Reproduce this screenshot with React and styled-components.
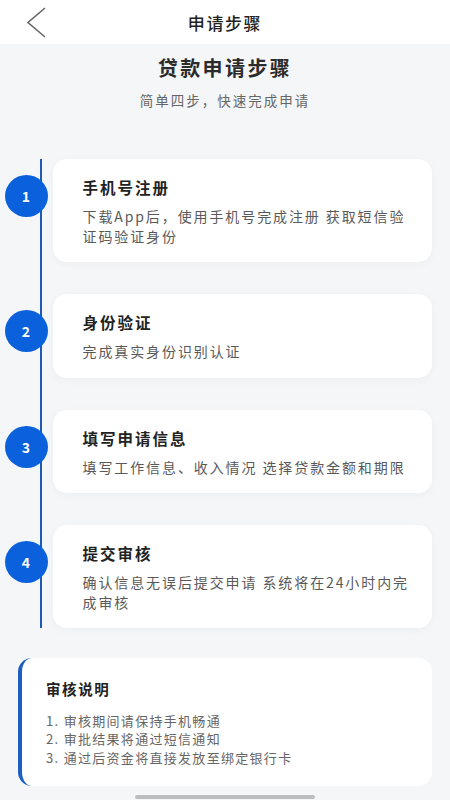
import React from 'react';
import styled, { createGlobalStyle } from 'styled-components';

const steps = [
  { title: '手机号注册', desc: '下载App后，使用手机号完成注册 获取短信验证码验证身份' },
  { title: '身份验证', desc: '完成真实身份识别认证' },
  { title: '填写申请信息', desc: '填写工作信息、收入情况 选择贷款金额和期限' },
  { title: '提交审核', desc: '确认信息无误后提交申请 系统将在24小时内完成审核' },
];

const notes = [
  '1. 审核期间请保持手机畅通',
  '2. 审批结果将通过短信通知',
  '3. 通过后资金将直接发放至绑定银行卡',
];

const GlobalStyle = createGlobalStyle`
  html, body {
    margin: 0;
    padding: 0;
    background: #f5f6f8;
    font-family: "Noto Sans CJK SC", "Noto Sans", sans-serif;
  }
  * { box-sizing: border-box; }
`;

const Page = styled.div`
  width: 450px;
  min-height: 800px;
  display: flex;
  flex-direction: column;
  background: #f5f6f8;
`;

const NavBar = styled.header`
  height: 44px;
  background: #fff;
  display: grid;
  grid-template-columns: 60px 1fr 60px;
  align-items: center;
`;

const BackButton = styled.button`
  border: 0;
  background: none;
  padding: 0 0 0 26px;
  height: 44px;
  display: flex;
  align-items: center;
`;

const NavTitle = styled.h1`
  margin: 0;
  text-align: center;
  font-size: 17px;
  font-weight: 500;
  letter-spacing: 1.6px;
  color: #222;
`;

const Intro = styled.section`
  display: flex;
  flex-direction: column;
  align-items: center;
  padding-top: 11px;
`;

const Heading = styled.h2`
  margin: 0;
  font-size: 20px;
  line-height: 26px;
  font-weight: 700;
  letter-spacing: 2.4px;
  color: #2b2b2b;
`;

const Sub = styled.p`
  margin: 9px 0 0;
  font-size: 13.5px;
  line-height: 20px;
  letter-spacing: 2px;
  color: #666;
`;

const Timeline = styled.div`
  margin: 49px 18px 0 40px;
  border-left: 2.5px solid #1c5bb5;
  padding-left: 10.5px;
  display: flex;
  flex-direction: column;
  gap: 32px;
`;

const Step = styled.div`
  position: relative;
`;

const Marker = styled.div`
  position: absolute;
  left: -48px;
  top: 16px;
  width: 43px;
  height: 42px;
  border-radius: 50%;
  background: #0b60dc;
  color: #fff;
  font-size: 14px;
  font-weight: 700;
  display: flex;
  align-items: center;
  justify-content: center;
`;

const Card = styled.div`
  background: #fff;
  border-radius: 14px;
  padding: 18px 16px 16px 30px;
  box-shadow: 0 2px 8px rgba(30, 40, 60, 0.04);
`;

const CardTitle = styled.h3`
  margin: 0;
  font-size: 15.5px;
  line-height: 20px;
  font-weight: 700;
  letter-spacing: 2px;
  color: #222;
`;

const CardDesc = styled.p`
  margin: 10px 0 0;
  font-size: 14px;
  line-height: 19.5px;
  letter-spacing: 1.9px;
  color: #595959;
`;

const Notice = styled.section`
  margin: 30px 18px 0;
  background: #fff;
  border-radius: 14px;
  border-left: 4px solid #1c5fc0;
  padding: 21px 20px 19px 24px;
`;

const NoticeTitle = styled.h3`
  margin: 0;
  font-size: 14.5px;
  line-height: 20px;
  font-weight: 700;
  letter-spacing: 1.6px;
  color: #222;
`;

const NoticeList = styled.ol`
  list-style: none;
  margin: 12.5px 0 0;
  padding: 0;
`;

const NoticeItem = styled.li`
  font-size: 13px;
  line-height: 18.5px;
  letter-spacing: 1.3px;
  color: #666;
`;

const HomeBar = styled.div`
  align-self: center;
  width: 180px;
  height: 4px;
  margin-top: 9px;
  border-radius: 2px;
  background: #bdbdbd;
`;

export default function App() {
  return (
    <Page>
      <GlobalStyle />
      <NavBar>
        <BackButton aria-label="返回">
          <svg width="20" height="31" viewBox="0 0 20 31" fill="none">
            <polyline points="19,1 2,15.5 19,30" stroke="#666" strokeWidth="1.6" />
          </svg>
        </BackButton>
        <NavTitle>申请步骤</NavTitle>
        <span />
      </NavBar>

      <Intro>
        <Heading>贷款申请步骤</Heading>
        <Sub>简单四步，快速完成申请</Sub>
      </Intro>

      <Timeline>
        {steps.map((s, i) => (
          <Step key={s.title}>
            <Marker>{i + 1}</Marker>
            <Card>
              <CardTitle>{s.title}</CardTitle>
              <CardDesc>{s.desc}</CardDesc>
            </Card>
          </Step>
        ))}
      </Timeline>

      <Notice>
        <NoticeTitle>审核说明</NoticeTitle>
        <NoticeList>
          {notes.map(n => (
            <NoticeItem key={n}>{n}</NoticeItem>
          ))}
        </NoticeList>
      </Notice>

      <HomeBar />
    </Page>
  );
}
